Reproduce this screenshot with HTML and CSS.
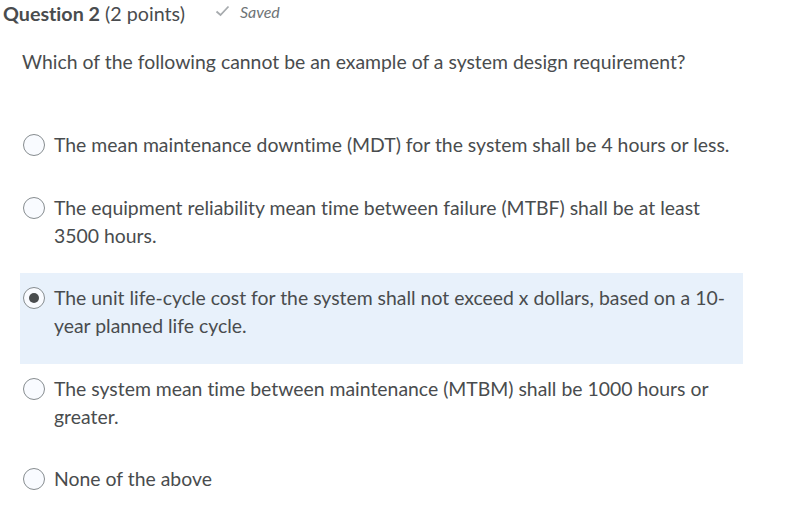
FILE: index.html
```html
<!DOCTYPE html>
<html>
<head>
<meta charset="utf-8">
<link rel="stylesheet" href="styles.css">
</head>
<body>
<div class="header">
  <span class="qtitle"><b>Question 2</b> (2 points)</span>
  <span class="saved"><svg class="check" width="15" height="12" viewBox="0 0 15 12"><path d="M1.5 6.5 L5.5 10 L13.5 1.5" fill="none" stroke="#a7abae" stroke-width="1.8"/></svg><i>Saved</i></span>
</div>
<div class="question">
  <p class="prompt">Which of the following cannot be an example of a system design requirement?</p>
  <div class="options">
    <div class="option"><span class="radio"></span><span class="label">The mean maintenance downtime (MDT) for the system shall be 4 hours or less.</span></div>
    <div class="option"><span class="radio"></span><span class="label">The equipment reliability mean time between failure (MTBF) shall be at least 3500 hours.</span></div>
    <div class="option selected"><span class="radio checked"></span><span class="label">The unit life-cycle cost for the system shall not exceed x dollars, based on a 10-year planned life cycle.</span></div>
    <div class="option"><span class="radio"></span><span class="label">The system mean time between maintenance (MTBM) shall be 1000 hours or greater.</span></div>
    <div class="option"><span class="radio"></span><span class="label">None of the above</span></div>
  </div>
</div>
</body>
</html>
```
FILE: styles.css
```css
html, body {
  margin: 0;
  padding: 0;
  background: #ffffff;
}
body {
  font-family: Lato, "Open Sans", sans-serif;
  color: #494c4e;
  width: 800px;
  height: 512px;
  overflow: hidden;
  font-variant-ligatures: none;
}
.header {
  display: flex;
  align-items: center;
  padding: 1px 0 0 3px;
  height: 26px;
}
.qtitle {
  font-size: 19.7px;
  line-height: 24px;
}
.qtitle b {
  font-weight: 700;
}
.saved {
  margin-left: 30px;
  font-size: 16px;
  color: #6e7376;
  display: flex;
  align-items: center;
  gap: 10px;
  position: relative;
  top: -3px;
}
.question {
  padding: 0 0 0 20px;
}
.prompt {
  margin: 0;
  padding-top: 21px;
  font-size: 19.4px;
  line-height: 28px;
  padding-left: 2px;
  height: 72px;
}
.options {
  width: 723px;
}
.option {
  display: flex;
  align-items: flex-start;
  padding: 11px 10px 23.5px 3px;
  font-size: 19.4px;
  line-height: 28px;
}
.option.selected {
  background: #e8f1fb;
}
.radio {
  flex: none;
  width: 20px;
  height: 20px;
  border: 1px solid #868c8f;
  border-radius: 50%;
  background: #f9fbff;
  margin-top: 3px;
  margin-right: 9px;
  position: relative;
}
.radio.checked::after {
  content: "";
  position: absolute;
  left: 5px;
  top: 5px;
  width: 10px;
  height: 10px;
  border-radius: 50%;
  background: #494c4e;
}
.label {
  flex: 1;
}
```
